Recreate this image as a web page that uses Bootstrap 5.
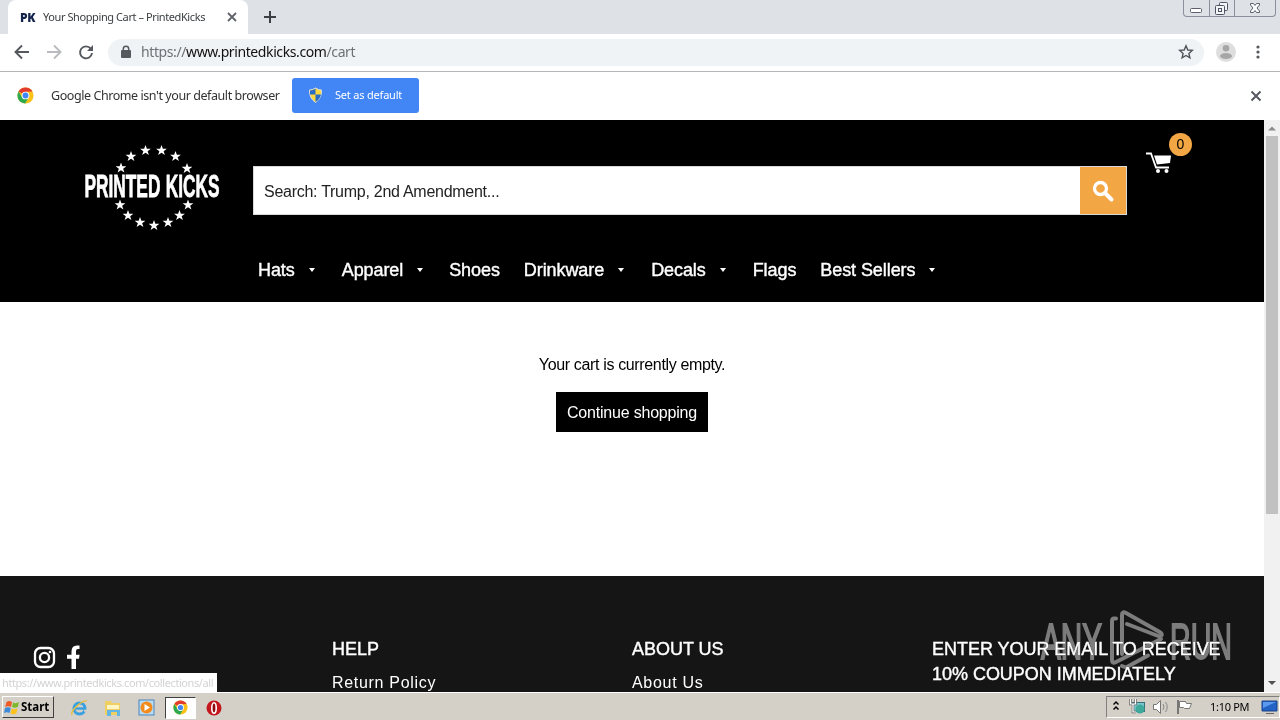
<!DOCTYPE html>
<html lang="en">
<head>
  <meta charset="UTF-8" />
  <meta name="viewport" content="width=device-width, initial-scale=1.0" />
  <title>Your Shopping Cart – PrintedKicks</title>
  <link href="https://cdn.jsdelivr.net/npm/bootstrap@5.3.0/dist/css/bootstrap.min.css" rel="stylesheet" />
  <style>
    body { width: 1280px; height: 720px; overflow: hidden; font-family: "Liberation Sans", Arial, sans-serif; font-size: 16px; color: #000; background: #fff; }
    svg { display: block; flex: none; }
    a { color: inherit; text-decoration: none; }
    .ui-font { font-family: "Noto Sans", Tahoma, sans-serif; white-space: nowrap; }

    /* browser window */
    .tab-strip { height: 34px; background: #dee1e6; }
    .browser-tab { width: 240px; margin-left: 8px; padding-left: 12px; background: #fff; border-radius: 8px 8px 0 0; color: #3c4043; }
    .favicon { width: 23px; font: 800 12px "Open Sans", sans-serif; letter-spacing: -.4px; color: #13234b; }
    .tab-title { width: 176px; font-size: 11px; letter-spacing: -.41px; }
    .new-tab { margin-left: 15px; }
    .win-buttons { width: 93px; height: 17px; margin-right: 4px; border: 1px solid #8b8f9c; border-top: 0; border-radius: 0 0 4px 4px; }
    .win-buttons span + span { border-left: 1px solid #8b8f9c; }
    .toolbar { height: 38px; padding-left: 14px; padding-bottom: 1px; border-bottom: 1px solid #b4b5b7; }
    .address { width: 1096px; height: 27px; margin-left: 14px; padding: 0 10px 0 12px; border-radius: 14px; background: #f0f3f5; font-size: 14px; color: #6d7175; }
    .url-text { letter-spacing: -.4px; margin-top: -1px; }
    .address b { font-weight: 400; color: #111; }
    .infobar { height: 48px; padding: 0 18px 1px 17px; color: #333; }
    .infobar-text { width: 241px; margin: 1px 0 0 17px; font-size: 12.5px; letter-spacing: -.43px; }
    .btn-default-browser { width: 127px; height: 35px; padding: 0 0 1px 16px; border: 0; border-radius: 3px; background: #4285f4; color: #fff; font-size: 11px; letter-spacing: -.2px; }

    /* shop page */
    .viewport { height: 572px; }
    .page-area { width: 1264px; }
    .site-header { height: 182px; background: #000; color: #fff; }
    .logo { margin: 17px 0 0 80px; }
    .search-box { width: 874px; height: 49px; margin: 46px 0 0 28px; background: #fff; border: 1px solid #d9d9d9; }
    .search-box input { border: 0; padding: 2px 0 0 10px; font-size: 16px; outline: 0; letter-spacing: -.27px; }
    .search-box input::placeholder { color: #222; }
    .search-btn { width: 46px; background: #f2a644; }
    .cart-link { margin: 13px 0 0 19px; }
    .cart-count { width: 23px; height: 23px; margin-left: -3px; border-radius: 50%; background: #f2a644; color: #000; font-size: 14px; }
    .site-nav { padding-left: 258px; font-size: 18px; line-height: 24px; gap: 24px; margin-top: 19px; letter-spacing: -.08px; -webkit-text-stroke: .4px #fff; }
    .caret { width: 6px; margin: 0 3px 0 14px; border: 3px solid transparent; border-top: 4px solid #fff; border-bottom: 0; }
    .site-nav a:nth-child(2) .caret { margin-right: 2px; }
    .cart-main { height: 274px; padding-top: 51px; }
    .empty-note { height: 24px; line-height: 24px; letter-spacing: -.35px; }
    .btn-shop { width: 152px; height: 40px; margin-top: 15px; padding: 2px 0 0; border: 0; border-radius: 0; background: #000; color: #fff; font-size: 16px; letter-spacing: -.2px; }
    .btn-shop:hover { background: #000; color: #fff; }
    .site-footer { height: 116px; background: #151515; color: #fff; padding: 61px 0 0 32px; }
    .foot-col { width: 300px; }
    .foot-col h2 { font-size: 18px; line-height: 25px; margin: 0 0 9px; font-weight: 400; letter-spacing: -.03px; -webkit-text-stroke: .4px #fff; }
    .foot-col a { display: block; line-height: 24px; letter-spacing: .7px; }
    .social { margin-top: 7px; }
    .scroll-col { width: 16px; background: #f1f1f1; }
    .scroll-thumb { width: 12px; height: 378px; background: #c1c1c1; }

    /* overlays */
    .status-tip { position: absolute; left: 0; top: 673px; width: 217px; height: 19px; padding-left: 2px; background: #fff; color: #d3d3d3; font-size: 11px; line-height: 20px; letter-spacing: -.41px; }
    .watermark { position: absolute; left: 1034px; top: 604px; mix-blend-mode: lighten; }

    /* taskbar */
    .taskbar { height: 28px; background: #d4d0c8; border-top: 1px solid #fff; padding: 3px 0 1px 2px; }
    .start-btn { width: 52px; height: 22px; padding-left: 1px; border: 1px solid; border-color: #fff #404040 #404040 #fff; color: #000; font: bold 11.5px "Noto Sans", sans-serif; }
    .start-label { margin: -1px 0 0 1px; }
    .task-icons { margin-left: 16px; }
    .task-active { width: 31px; height: 22px; background: #fff; border: 1px solid; border-color: #404040 #fff #fff #404040; }
    .tray { width: 174px; height: 22px; border: 1px solid; border-color: #808080 #fff #fff #808080; font-size: 11px; color: #000; padding-left: 6px; }
    .clock { margin-left: 9px; letter-spacing: -.3px; }
  </style>
</head>
<body>
  <svg width="0" height="0" class="position-absolute">
    <symbol id="chrome" viewBox="0 0 18 18">
      <circle cx="9" cy="9" r="8.5" fill="#fbc116" />
      <path d="M9 9 1.6 4.8A8.5 8.5 0 0 1 16.4 4.8L9 5z" fill="#e33b2e" />
      <path d="M1.6 4.8A8.5 8.5 0 0 0 8.6 17.5L12.4 11 5.5 11z" fill="#2da94f" />
      <circle cx="9" cy="9" r="4.1" fill="#fff" />
      <circle cx="9" cy="9" r="3.1" fill="#4285f4" />
    </symbol>
    <symbol id="star" viewBox="-5 -5 10 10">
      <path d="M0-5 1.25-1.6H4.9L1.95.6 3.1 4.2 0 2-3.1 4.2-1.95.6-4.9-1.6H-1.25z" />
    </symbol>
  </svg>

  <div class="tab-strip d-flex ui-font">
    <div class="browser-tab d-flex align-items-center">
      <span class="favicon">PK</span>
      <span class="tab-title">Your Shopping Cart – PrintedKicks</span>
      <svg width="24" height="12" viewBox="0 0 24 12"><path d="M9 2l8 8M17 2l-8 8" stroke="#5f6368" stroke-width="1.8" /></svg>
    </div>
    <svg class="new-tab align-self-center" width="14" height="14"><path d="M7 1v12M1 7h12" stroke="#3c4043" stroke-width="2" /></svg>
    <div class="win-buttons ms-auto d-flex">
      <span style="width:25px"><svg width="25" height="16"><rect x="6.500" y="8.500" width="11" height="4" rx="1" fill="#fff" stroke="#5c6070" /></svg></span>
      <span style="width:25px"><svg width="24" height="16" fill="#f4f5f7" stroke="#4f5464"><rect x="9.500" y="2.500" width="8" height="8" rx="1" /><rect x="5.500" y="5.500" width="9" height="9" rx="1" /><rect x="8.500" y="8.500" width="3" height="3" /></svg></span>
      <span><svg width="40" height="16"><path d="M15.500 3.500h3l1.500 2 1.500-2h3v1.500l-2.500 3 2.500 3v1.500h-3l-1.500-2-1.500 2h-3V11l2.500-3-2.500-3z" fill="#fff" stroke="#5c6070" /></svg></span>
    </div>
  </div>

  <div class="toolbar d-flex align-items-center ui-font">
    <svg width="80" height="18" fill="none" stroke="#55595e" stroke-width="1.900">
      <path d="M15 9H2M8 2.500 1.500 9 8 15.500" />
      <path d="M33 9h13M40 2.500 46.500 9 40 15.500" stroke="#b9bbbe" />
      <path d="M76.800 5.700A6 6 0 1 0 78 10" /><path d="M79 2v6h-6z" fill="#55595e" stroke="none" />
    </svg>
    <div class="address d-flex align-items-center">
      <svg width="21" height="14"><rect x="1" y="5" width="10" height="8" rx="1" fill="#55595e" /><path d="M3.300 6V4a2.700 2.700 0 0 1 5.400 0v2" fill="none" stroke="#55595e" stroke-width="1.500" /></svg>
      <span class="url-text">https://<b>www.printedkicks.com</b>/cart</span>
      <svg class="ms-auto" width="16" height="16"><path d="M8 1.800 9.800 6l4.500.400-3.400 3 1 4.400L8 11.500l-3.900 2.300 1-4.400-3.400-3L6.200 6z" fill="none" stroke="#50545a" stroke-width="1.400" /></svg>
    </div>
    <svg class="ms-2" width="28" height="22"><circle cx="14" cy="11" r="10" fill="#dedede" /><circle cx="14" cy="7.300" r="3.300" fill="#a6a6a6" /><ellipse cx="14" cy="15" rx="6" ry="3" fill="#a6a6a6" /></svg>
    <svg class="ms-auto me-3" width="12" height="16" fill="#55595e"><circle cx="6" cy="3" r="1.600" /><circle cx="6" cy="8" r="1.600" /><circle cx="6" cy="13" r="1.600" /></svg>
  </div>

  <div class="infobar d-flex align-items-center ui-font">
    <svg width="17" height="17"><use href="#chrome" /></svg>
    <span class="infobar-text">Google Chrome isn't your default browser</span>
    <button class="btn btn-default-browser d-flex align-items-center">
      <svg width="27" height="16" viewBox="0 0 27 16">
        <path d="M7.500 1Q10.500 3 13.500 3 14 11 7.500 15.500 1 11 1.500 3 4.500 3 7.500 1z" fill="#ffd93b" stroke="#d9dde0" />
        <path d="M7.500 1.500v6H2V3.500Q5 3.400 7.500 1.500zM7.500 7.500h5.500Q12 12 7.500 15z" fill="#2b6cc4" />
      </svg>
      <span class="btn-label">Set as default</span>
    </button>
    <svg class="ms-auto" width="12" height="12"><path d="M1.500 1.500l9 9M10.500 1.500l-9 9" stroke="#55595e" stroke-width="2" /></svg>
  </div>

  <div class="viewport d-flex">
    <div class="page-area">
      <header class="site-header overflow-hidden">
        <div class="d-flex align-items-start">
          <a class="logo" href="#">
            <svg width="145" height="102" fill="#fff">
              <text x="4.500" y="60" font-size="31" font-weight="700" word-spacing="1" stroke="#fff" stroke-width=".8" textLength="135" lengthAdjust="spacingAndGlyphs">PRINTED KICKS</text>
              <g id="stars"></g>
            </svg>
          </a>
          <div class="search-box d-flex">
            <input class="flex-grow-1" type="text" placeholder="Search: Trump, 2nd Amendment..." />
            <button class="btn search-btn p-0 rounded-0 d-flex align-items-center justify-content-center">
              <svg width="24" height="24" fill="none" stroke="#fff"><circle cx="9.500" cy="9.500" r="6" stroke-width="3.300" /><path d="M14 14l6.500 6.500" stroke-width="4" stroke-linecap="round" /></svg>
            </button>
          </div>
          <a class="cart-link d-flex" href="#">
            <svg width="26" height="42" fill="#fff">
              <path d="M0 20.500h5l5 14h13" fill="none" stroke="#fff" stroke-width="1.800" /><path d="M8 22.500H25l-1 7.500-13 1.500z" /><circle cx="12" cy="38" r="2" /><circle cx="20.500" cy="38" r="2" />
            </svg>
            <span class="cart-count d-flex align-items-center justify-content-center">0</span>
          </a>
        </div>
        <nav class="site-nav d-flex">
          <a class="d-flex align-items-center" href="#">Hats<i class="caret"></i></a>
          <a class="d-flex align-items-center" href="#">Apparel<i class="caret"></i></a>
          <a href="#">Shoes</a>
          <a class="d-flex align-items-center" href="#">Drinkware<i class="caret"></i></a>
          <a class="d-flex align-items-center" href="#">Decals<i class="caret"></i></a>
          <a href="#">Flags</a>
          <a class="d-flex align-items-center" href="#">Best Sellers<i class="caret"></i></a>
        </nav>
      </header>

      <main class="cart-main d-flex flex-column align-items-center">
        <p class="empty-note m-0">Your cart is currently empty.</p>
        <a class="btn btn-shop d-flex align-items-center justify-content-center" href="#">Continue shopping</a>
      </main>

      <footer class="site-footer d-flex overflow-hidden">
        <div class="foot-col d-flex">
          <svg class="social" width="50" height="28" fill="none" stroke="#fff" stroke-width="2.300">
            <rect x="3" y="4" width="19" height="19" rx="5.500" /><circle cx="12.500" cy="13.500" r="4.600" /><circle cx="18" cy="8" r="1.300" fill="#fff" stroke="none" />
            <path d="M39.500 25V14.800H35v-4h4.500V7.500Q39.500 1.500 45 1.500h2.500v3.600H46Q44 5.100 44 7v3.800h3.600l-.600 4h-3V25z" fill="#fff" stroke="none" />
          </svg>
        </div>
        <div class="foot-col"><h2>HELP</h2><a href="#">Return Policy</a></div>
        <div class="foot-col"><h2>ABOUT US</h2><a href="#">About Us</a></div>
        <div class="foot-col"><h2>ENTER YOUR EMAIL TO RECEIVE<br>10% COUPON IMMEDIATELY</h2></div>
      </footer>
    </div>

    <div class="scroll-col d-flex flex-column align-items-center">
      <svg width="16" height="16"><path d="M4 10.500h8L8 6.500z" fill="#8c8c8c" /></svg>
      <div class="scroll-thumb"></div>
      <svg class="mt-auto" width="16" height="18"><path d="M4 7h8l-4 4z" fill="#505050" /></svg>
    </div>
  </div>

  <div class="taskbar d-flex ui-font">
    <div class="start-btn d-flex align-items-center">
      <svg width="16" height="16"><path d="M2.500 3Q5 1 8 3L7 8Q4 6.500 1.200 8z" fill="#ef5a28" /><path d="M9 3.500Q12 5 15 3l-1.200 5Q11 9.500 8 8z" fill="#7db928" /><path d="M1 9Q4 7.500 6.800 9l-1.200 5Q3 12.500 0 14z" fill="#3c8ad8" /><path d="M7.800 9.500Q10.500 11 13.500 9.500l-1.200 5Q9 16 6.500 14.500z" fill="#fbc21b" /></svg>
      <span class="start-label">Start</span>
    </div>
    <div class="task-icons d-flex align-items-center">
      <svg width="18" height="18" fill="none"><circle cx="9.500" cy="9.500" r="5.500" stroke="#3ba0e0" stroke-width="3" /><path d="M4.500 9.500h11" stroke="#3ba0e0" stroke-width="2.400" /><path d="M14 11.700h4" stroke="#d4d0c8" stroke-width="2" /><path d="M2 16C0 12 12 1 17 2" stroke="#e6bd3c" stroke-width="1.400" /></svg>
      <svg class="ms-3" width="18" height="18"><path d="M1 2h6l1 2h8v12H1z" fill="#efcf62" /><path d="M3 6h12v4H3z" fill="#fff5c4" /><path d="M3 17v-6h13v6h-3v-4H7v4z" fill="#64b6e4" /></svg>
      <svg class="ms-3" width="18" height="18"><rect x="1" y="1" width="15" height="15" fill="#b9dcf5" stroke="#4b84bd" /><circle cx="8.500" cy="8.500" r="6" fill="#f38b1c" /><path d="M6.500 5v7l5.500-3.500z" fill="#fff" /></svg>
      <div class="task-active d-flex align-items-center justify-content-center" style="margin-left:9px"><svg width="15" height="15"><use href="#chrome" /></svg></div>
      <svg style="margin-left:10px" width="16" height="16"><circle cx="8" cy="8" r="7.500" fill="#c4161c" /><ellipse cx="8" cy="8" rx="2.200" ry="5.200" fill="#8e0b10" stroke="#fff" stroke-width="1.600" /></svg>
    </div>
    <div class="tray ms-auto d-flex align-items-center">
      <svg width="88" height="18" fill="none">
        <path d="M.500 6.500l2.500-2.500 2.500 2.500M.500 11.500l2.500-2.500 2.500 2.500" stroke="#000" stroke-width="1.500" />
        <rect x="19.500" y="4.500" width="12" height="9" fill="#78c8d0" stroke="#39707a" /><circle cx="27" cy="11" r="4.500" fill="#3fa99c" /><path d="M17.500 1v5h5V1M20 6v8h3" stroke="#666" stroke-width="2.600" /><path d="M17.500 1v5h5V1M20 6v8h3" stroke="#fff" stroke-width="1.200" />
        <path d="M40.500 6.500h3l4-4v13l-4-4h-3z" fill="#fff" stroke="#777" /><path d="M50 6q2 3 0 6M52.500 4q3.500 5 0 10" stroke="#888" />
        <path d="M65 2v14" stroke="#777" stroke-width="2" /><path d="M66.500 3.500h6l1 2h5l-2 5h-5l-1-1h-4z" fill="#fff" stroke="#777" />
      </svg>
      <span class="clock">1:10 PM</span>
      <svg class="ms-auto" width="18" height="18"><path d="M1 3h15v10H1z" fill="#2463c6" stroke="#16428a" /><path d="M2 4h13L2 10z" fill="#5c9af0" /><path d="M5 15.500h8" stroke="#666" /></svg>
    </div>
  </div>

  <div class="status-tip ui-font">https://www.printedkicks.com/collections/all</div>

  <svg class="watermark" width="204" height="72" viewBox="0 0 204 72" fill="#7d7d7d">
    <g font-size="50" font-family="Liberation Sans Narrow, Liberation Sans, sans-serif" stroke="#7d7d7d" stroke-width="2">
      <text x="7" y="54.500" textLength="61" lengthAdjust="spacingAndGlyphs">ANY</text>
      <text x="136" y="54.500" textLength="62" lengthAdjust="spacingAndGlyphs">RUN</text>
    </g>
    <g fill="none" stroke="#7d7d7d" stroke-width="4" stroke-linejoin="round" stroke-linecap="round">
      <path d="M82 14.500h-2q-2 0-2 3V56q0 4 4 2L127 35" />
      <path d="M88 50V11q0-4 4-2L126.500 28.500q3 3-1 4L93 20M88 62l4 1.500 22-12" />
    </g>
  </svg>

  <script>
    // centres of the logo's stars
    const points = [[41, 31], [51, 19.5], [65.5, 13.5], [81.5, 13.5], [95.5, 19.5], [107, 31.500], [40, 68], [48, 78.5], [60, 85.5], [74, 88.500], [88, 85.5], [99.5, 78.5], [108, 68]];
    document.getElementById('stars').innerHTML = points.map(([x, y]) =>
      `<use href="#star" x="${x - 5.5}" y="${y - 5.5}" width="11" height="11" />`).join('');
  </script>
  <script src="https://cdn.jsdelivr.net/npm/bootstrap@5.3.0/dist/js/bootstrap.bundle.min.js"></script>
</body>
</html>
